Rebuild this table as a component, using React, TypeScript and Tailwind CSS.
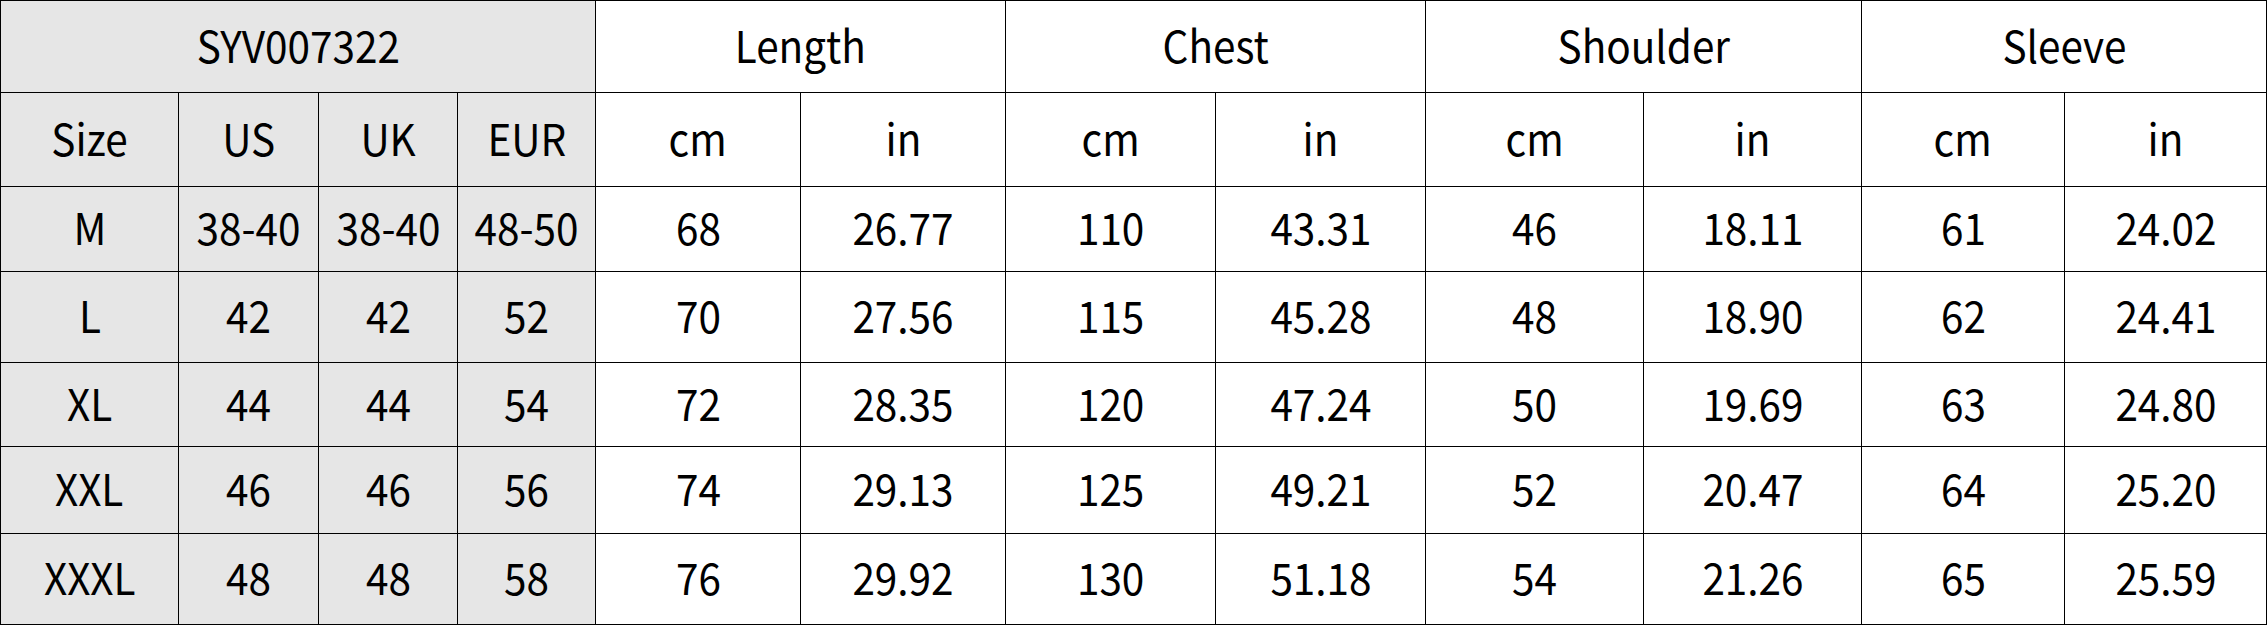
const rows = [
  ['M', '38-40', '38-40', '48-50', '68', '26.77', '110', '43.31', '46', '18.11', '61', '24.02'],
  ['L', '42', '42', '52', '70', '27.56', '115', '45.28', '48', '18.90', '62', '24.41'],
  ['XL', '44', '44', '54', '72', '28.35', '120', '47.24', '50', '19.69', '63', '24.80'],
  ['XXL', '46', '46', '56', '74', '29.13', '125', '49.21', '52', '20.47', '64', '25.20'],
  ['XXXL', '48', '48', '58', '76', '29.92', '130', '51.18', '54', '21.26', '65', '25.59'],
]

const groups = ['Length', 'Chest', 'Shoulder', 'Sleeve']

function Cell({ children, gray, span }: { children: React.ReactNode; gray?: boolean; span?: string }) {
  return (
    <div className={`${gray ? 'bg-[#e6e6e6]' : 'bg-white'} ${span ?? ''} flex items-center justify-center pb-1.5`}>
      <span className="inline-block scale-x-[0.92] whitespace-nowrap">{children}</span>
    </div>
  )
}

export default function App() {
  return (
    <div className="w-[2268px] h-[625px] bg-white">
      <div
        className="inline-grid p-px gap-px bg-black text-black text-[44px] leading-none grid-cols-[177px_139px_138px_137px_204px_204px_209px_209px_217px_217px_202px_201px] grid-rows-[91px_93px_84px_90px_83px_86px_90px]"
        style={{ fontFamily: '"Noto Sans CJK SC", "Noto Sans", sans-serif' }}
      >
        <Cell gray span="col-span-4">SYV007322</Cell>
        {groups.map((g) => (
          <Cell key={g} span="col-span-2">{g}</Cell>
        ))}

        <Cell gray>Size</Cell>
        <Cell gray>US</Cell>
        <Cell gray>UK</Cell>
        <Cell gray>EUR</Cell>
        {groups.map((g) => [
          <Cell key={g + 'cm'}>cm</Cell>,
          <Cell key={g + 'in'}>in</Cell>,
        ])}

        {rows.map((r) =>
          r.map((v, i) => (
            <Cell key={r[0] + i} gray={i < 4}>{v}</Cell>
          ))
        )}
      </div>
    </div>
  )
}
